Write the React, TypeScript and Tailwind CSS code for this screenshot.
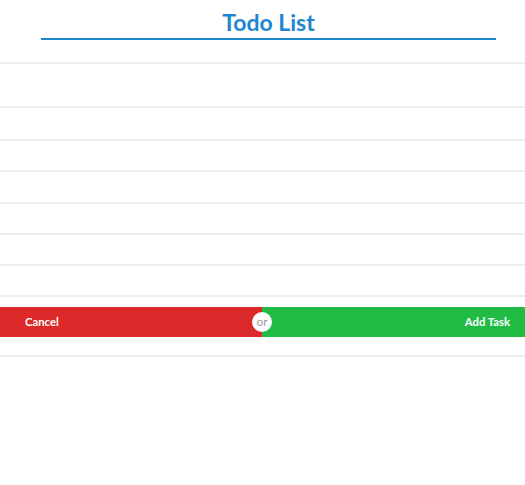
import React from "react";

export default function App() {
  const rows = ["h-[44px]", "h-[33px]", "h-[31px]", "h-[32px]", "h-[31px]", "h-[31px]", "h-[31px]"];
  return (
    <div className="w-[525px] h-[485px] bg-white" style={{ fontFamily: "Lato, 'Open Sans', sans-serif" }}>
      <div className="pt-[8px] ml-[41px] w-[455px]">
        <h1 className="text-center text-[23px] leading-[28px] font-bold text-[#2185d0] pb-[2px] border-b-2 border-[#2185d0]">
          Todo List
        </h1>
      </div>
      <div className="mt-[22px]">
        {rows.map((h, i) => (
          <div key={i} className={`${h} border-t-2 border-[#ededed]`} />
        ))}
        <div className="border-t-2 border-[#ededed] pt-[10px]">
          <div className="relative flex h-[30px] text-[11.3px] font-bold text-white">
            <div className="w-[262px] bg-[#db2828] flex items-center pl-[25px]">Cancel</div>
            <div className="flex-1 bg-[#21ba45] flex items-center justify-end pr-[15px]">Add Task</div>
            <div className="absolute left-[252px] top-[5px] w-[20px] h-[20px] rounded-full bg-white flex items-center justify-center text-[12px] font-normal text-[#9b9b9b] leading-none pb-[1px]">
              or
            </div>
          </div>
        </div>
        <div className="mt-[18px] border-t-2 border-[#ededed]" />
      </div>
    </div>
  );
}
